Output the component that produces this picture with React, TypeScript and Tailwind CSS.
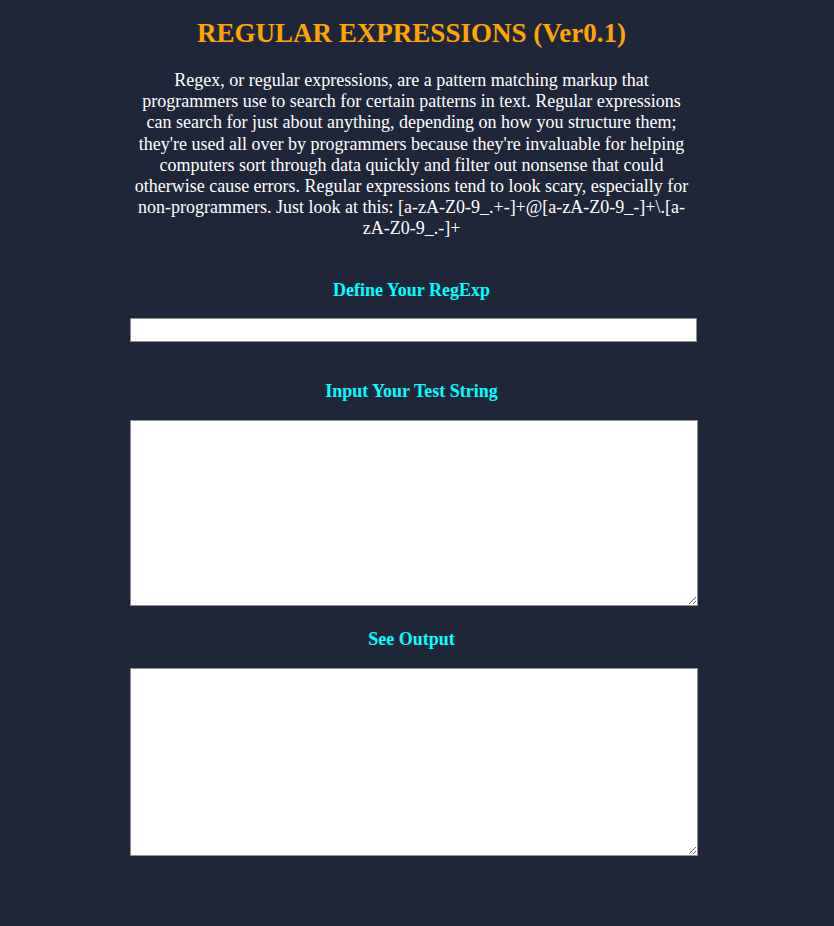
export default function App() {
  return (
    <div className="min-h-[926px] bg-[#202639] font-['Liberation_Serif',serif]">
      <div className="ml-[130px] w-[568px] pb-[40px]">
        <h1 className="pt-[18px] pr-[5px] text-center text-[27px] leading-[30px] font-bold text-[#ffa500]">
          REGULAR EXPRESSIONS (Ver0.1)
        </h1>
        <p className="mt-[22px] pr-[5px] text-center text-[18px] leading-[21.2px] text-white">
          Regex, or regular expressions, are a pattern matching markup that programmers use to
          search for certain patterns in text. Regular expressions can search for just about
          anything, depending on how you structure them; they're used all over by programmers
          because they're invaluable for helping computers sort through data quickly and filter
          out nonsense that could otherwise cause errors. Regular expressions tend to look scary,
          especially for non-programmers. Just look at this: [a-zA-Z0-9_.+-]+@[a-zA-Z0-9_-]+\.[a-zA-Z0-9_.-]+
        </p>
        <h3 className="mt-[39px] pr-[5px] text-center text-[18px] leading-[22px] font-bold text-[#00ffff]">
          Define Your RegExp
        </h3>
        <input
          type="text"
          className="mt-[17px] block h-[24px] w-[567px] border border-[#8f8f8f] bg-white px-[2px] text-[13px] outline-none"
        />
        <h3 className="mt-[38px] pr-[5px] text-center text-[18px] leading-[22px] font-bold text-[#00ffff]">
          Input Your Test String
        </h3>
        <textarea className="mt-[18px] block h-[186px] w-[568px] border border-[#8f8f8f] bg-white text-[13px] outline-none" />
        <h3 className="mt-[22px] pr-[5px] text-center text-[18px] leading-[22px] font-bold text-[#00ffff]">
          See Output
        </h3>
        <textarea className="mt-[18px] block h-[188px] w-[568px] border border-[#8f8f8f] bg-white text-[13px] outline-none" />
      </div>
    </div>
  );
}
